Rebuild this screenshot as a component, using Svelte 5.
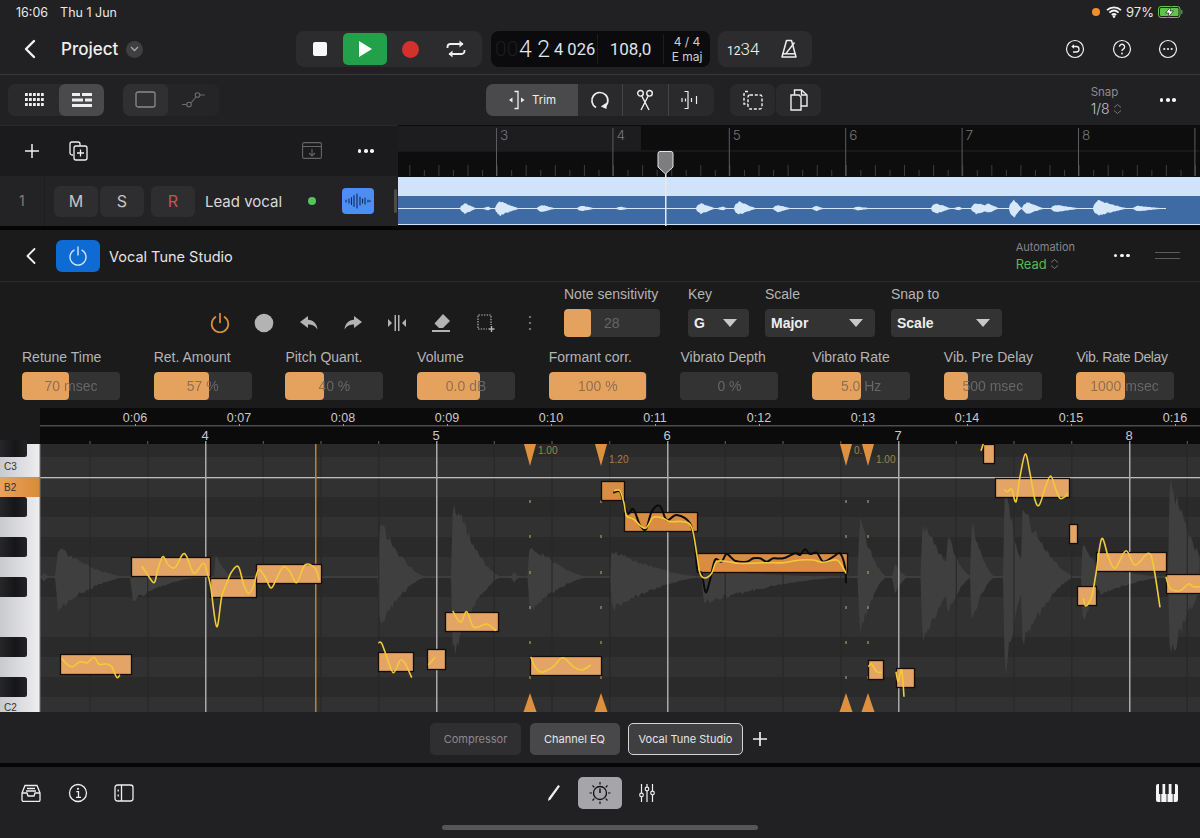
<script>
  function rng(seed) {
    let s = seed;
    return () => {
      s = (s * 16807) % 2147483647;
      return s / 2147483647;
    };
  }
  function wave(segs, x0, x1, cy, base, step, seed, p = 1.25, att = 3, jit = 0.15) {
    const r = rng(seed);
    const top = [];
    const bot = [];
    for (let x = x0; x <= x1; x += step) {
      let u = base;
      let d = base;
      for (const [o, len, a, b] of segs) {
        if (x < o - att || x > o + len) continue;
        const t = (x - o) / len;
        const e = t < 0 ? Math.sqrt((t * len + att) / att) : Math.pow(1 - t, p);
        u = Math.max(u, a * e);
        d = Math.max(d, b * e);
      }
      const j = 1 - jit + jit * r();
      top.push(`${x.toFixed(1)} ${(cy - u * j).toFixed(1)}`);
      bot.unshift(`${x.toFixed(1)} ${(cy + d * (1 - jit + jit * r())).toFixed(1)}`);
    }
    return 'M' + top.join('L') + 'L' + bot.join('L') + 'Z';
  }
  function curve(pts) {
    const p = pts.map(([x, y]) => [x / 3, 440 + y / 3]);
    let d = `M${p[0][0].toFixed(1)} ${p[0][1].toFixed(1)}`;
    for (let i = 0; i < p.length - 1; i++) {
      const a = p[Math.max(0, i - 1)];
      const b = p[i];
      const c = p[i + 1];
      const e = p[Math.min(p.length - 1, i + 2)];
      const c1 = [b[0] + (c[0] - a[0]) / 6, b[1] + (c[1] - a[1]) / 6];
      const c2 = [c[0] - (e[0] - b[0]) / 6, c[1] - (e[1] - b[1]) / 6];
      d += `C${c1[0].toFixed(1)} ${c1[1].toFixed(1)} ${c2[0].toFixed(1)} ${c2[1].toFixed(1)} ${c[0].toFixed(1)} ${c[1].toFixed(1)}`;
    }
    return d;
  }
  const off = (o, pts) => pts.map(([x, y]) => [x + o, y]);

  const edWave = wave(
    [[44, 6, 5, 5], [58, 72, 32, 36], [133, 70, 7, 26], [216, 18, 24, 29], [380, 48, 60, 55], [453, 50, 87, 86], [514, 6, 6, 6], [530, 62, 37, 38], [612, 95, 30, 36], [704, 150, 8, 29], [860, 28, 64, 63], [895, 14, 15, 18], [923, 42, 62, 75], [948, 25, 45, 40], [972, 24, 62, 48], [1005, 25, 104, 111], [1023, 55, 77, 73], [1083, 30, 37, 50], [1100, 70, 12, 20], [1170, 50, 107, 90]],
    40, 1200, 577, 1, 1.5, 91, 1.7, 2, 0.22
  );
  const regionWave = wave(
    [[465, 12, 6, 6], [488, 4, 2, 2], [500, 20, 8, 8], [542, 14, 4, 4], [582, 15, 3, 3], [621, 10, 2, 2], [701, 15, 6, 6], [723, 5, 2, 2], [739, 18, 8, 7], [778, 14, 4, 4], [817, 7, 3, 3], [858, 16, 2, 2], [936, 16, 6, 6], [959, 4, 2, 2], [976, 24, 6, 6], [988, 12, 6, 5], [1014, 8, 10, 10], [1027, 18, 7, 6], [1056, 26, 4, 4], [1098, 30, 9, 8], [1138, 28, 3, 3]],
    398, 1166, 208.5, 0.6, 1, 17, 1.1, 5, 0.25
  );

  const notes = [
    [60, 131, 654, 674], [131, 210, 557, 576], [210, 256, 578, 597], [256, 321, 564, 583],
    [378, 413, 652, 671], [427, 445, 649, 669], [445, 498, 612, 631], [530, 601, 656, 675],
    [601, 624, 481, 500, 1], [624, 697, 512, 531, 1], [697, 847, 553, 572, 1],
    [868, 883, 660, 679], [896, 914, 668, 687], [983, 994, 444, 463], [995, 1069, 478, 497],
    [1069, 1077, 524, 543], [1077, 1096, 586, 605], [1096, 1166, 552, 571], [1166, 1201, 574, 593]
  ];
  const yellow = [
    [[185, 655], [200, 672], [218, 680], [240, 665], [262, 668], [282, 652], [297, 673], [318, 672], [335, 680], [350, 712], [360, 705]],
    [[425, 378], [440, 400], [462, 428], [472, 395], [488, 350], [505, 375], [525, 383], [548, 343], [560, 350], [582, 400], [610, 370], [622, 400], [632, 440], [650, 560], [665, 470], [680, 430], [695, 395], [715, 380], [730, 430], [745, 460], [760, 440], [775, 390], [795, 410], [813, 444], [830, 415], [850, 380], [870, 395], [890, 428], [915, 375], [945, 385], [958, 420]],
    [[1135, 608], [1145, 610], [1160, 650], [1180, 698], [1200, 662], [1215, 670], [1235, 713]],
    off(1200, [[85, 675], [105, 652]]),
    off(1200, [[158, 513], [182, 547], [200, 515], [222, 562], [260, 552], [288, 572]]),
    off(1200, [[392, 650], [405, 680], [425, 697], [460, 680], [488, 653], [520, 680], [545, 690], [572, 675]]),
    off(1200, [[642, 152], [660, 152], [672, 190], [680, 228], [700, 237], [735, 265], [760, 232], [790, 235], [810, 245], [850, 245], [875, 262], [890, 340], [900, 400], [915, 414], [935, 400], [950, 365], [985, 365], [1020, 370], [1100, 368], [1150, 368], [1200, 360], [1240, 360], [1270, 367], [1310, 360], [1330, 385], [1338, 400]]),
    off(2400, [[205, 680], [215, 672], [230, 695], [245, 697]]),
    off(2400, [[288, 695], [295, 725], [305, 690], [312, 770]]),
    off(2400, [[543, 32], [550, 12]]),
    off(2400, [[612, 148], [622, 155], [635, 148], [648, 185], [660, 110], [676, 42], [690, 100], [705, 180], [718, 195], [735, 145], [752, 108], [768, 150], [780, 175], [795, 170], [803, 160]]),
    off(2400, [[850, 475], [857, 498], [875, 470], [888, 400], [905, 296], [925, 350], [945, 385], [978, 332], [1005, 375], [1045, 340], [1060, 375], [1080, 502]]),
    off(2400, [[1098, 410], [1110, 445], [1140, 452], [1165, 432], [1180, 440], [1200, 440]])
  ].map(curve);
  const black = curve(off(1200, [[640, 158], [660, 155], [672, 195], [685, 222], [700, 207], [720, 255], [738, 268], [755, 215], [780, 198], [800, 240], [830, 225], [870, 250], [885, 320], [892, 390], [905, 400], [917, 457], [930, 420], [945, 360], [965, 365], [980, 342], [1005, 362], [1040, 365], [1060, 355], [1080, 355], [1100, 365], [1120, 355], [1150, 355], [1185, 340], [1200, 345], [1215, 328], [1230, 342], [1250, 338], [1270, 365], [1300, 350], [1320, 340], [1335, 380], [1338, 430]]));

  const darkRows = [497, 537, 577, 637, 677];
  const minors = Array.from({ length: 20 }, (_, i) => 89.5 + i * 57.75);
  const bars = [[205, 4], [436, 5], [667, 6], [898, 7], [1129, 8]];
  const times = ['0:06', '0:07', '0:08', '0:09', '0:10', '0:11', '0:12', '0:13', '0:14', '0:15', '0:16'];
  const dashes = [500, 535, 571, 606, 641, 676];
  const marks = [530, 601, 846, 868];

  const arrBars = [[496, 3], [612.4, 4], [728.8, 5], [845.2, 6], [961.6, 7], [1078, 8], [1194.4, '']];
  const arrTicks = Array.from({ length: 56 }, (_, i) => 409.3 + i * 14.55);

  const sliders = [
    ['Retune Time', '70 msec', 46.5], ['Ret. Amount', '57 %', 55.5], ['Pitch Quant.', '40 %', 39],
    ['Volume', '0.0 dB', 63], ['Formant corr.', '100 %', 97], ['Vibrato Depth', '0 %', 0],
    ['Vibrato Rate', '5.0 Hz', 48.5], ['Vib. Pre Delay', '500 msec', 24], ['Vib. Rate Delay', '1000 msec', 49]
  ];
  const selects = [['Key', 'G', 'w-key'], ['Scale', 'Major', 'w-scale'], ['Snap to', 'Scale', 'w-snap']];
</script>

<div class="app">
  <div class="status">
    <span class="time">16:06</span><span class="date">Thu 1 Jun</span>
    <span class="grow"></span>
    <i class="odot"></i>
    <svg width="16" height="12" viewBox="0 0 16 12" class="wifi"><path d="M1 4.200C5 .5 11 .5 15 4.200M3.400 6.600c2.800-2.500 6.400-2.500 9.200 0M5.800 9c1.400-1.200 3-1.200 4.400 0" fill="none" stroke="#f2f2f2" stroke-width="1.800"/><circle cx="8" cy="10.600" r="1.300" fill="#f2f2f2"/></svg>
    <span class="pct">97%</span>
    <svg width="25" height="12" viewBox="0 0 25 12"><rect x=".5" y=".5" width="21.500" height="11" rx="2.500" fill="none" stroke="#6cc04a"/><rect x="2" y="2" width="18.500" height="8" rx="1.200" fill="#5fc44c"/><rect x="23" y="4" width="1.500" height="4" rx=".7" fill="#777"/><path d="M13 .5 7.500 7H11l-1 4.500L15.500 5H12z" fill="#fff" stroke="#222" stroke-width=".7"/></svg>
  </div>

  <div class="topbar">
    <div class="t-left">
      <svg width="14" height="20" viewBox="0 0 14 20" class="back"><path d="M11 2 3 10l8 8" fill="none" stroke="#f2f2f2" stroke-width="2.400" stroke-linecap="round" stroke-linejoin="round"/></svg>
      <span class="project">Project</span>
      <span class="chev"><svg width="9" height="6" viewBox="0 0 9 6"><path d="m1 1 3.500 3.500L8 1" fill="none" stroke="#a8a8aa" stroke-width="1.300"/></svg></span>
    </div>
    <div class="transport">
      <span class="tbtn"><i class="stop"></i></span>
      <span class="tbtn play"><svg width="14" height="16" viewBox="0 0 14 16"><path d="M1 0v16l13-8z" fill="#fff"/></svg></span>
      <span class="tbtn"><i class="rec"></i></span>
      <span class="tbtn"><svg width="20" height="18" viewBox="0 0 20 18"><path d="M1.500 8V7a3 3 0 0 1 3-3H17M18.500 10v1a3 3 0 0 1-3 3H3" fill="none" stroke="#f0f0f0" stroke-width="1.800"/><path d="M13.500 0.500 17.500 4l-4 3.500zM6.500 10.500 2.500 14l4 3.500z" fill="#f0f0f0"/></svg></span>
    </div>
    <div class="lcd">
      <span class="ghost">00</span><span class="big">4 2</span><span class="mid">4 026</span>
      <span class="tempo">108,0</span>
      <span class="sig"><span>4 / 4</span><span>E maj</span></span>
    </div>
    <div class="count">
      <span class="cnt"><small>12</small>34</span>
      <svg width="20" height="20" viewBox="0 0 20 20"><path d="M7.500 1.500h5l4.500 16.500h-14z" fill="none" stroke="#eee" stroke-width="1.500" stroke-linejoin="round"/><path d="M3.500 14.800h13" stroke="#eee" stroke-width="1.500"/><path d="M7 14.500 15.500 3.500" stroke="#eee" stroke-width="1.400"/></svg>
    </div>
    <span class="grow"></span>
    <div class="t-right">
      <svg width="20" height="20" viewBox="0 0 20 20"><circle cx="10" cy="10" r="8.500" fill="none" stroke="#f0f0f0" stroke-width="1.200"/><path d="M7.500 7.500h3.800a2.700 2.700 0 0 1 0 5.500H8" fill="none" stroke="#f0f0f0" stroke-width="1.300"/><path d="M9 5.300 6.300 7.500 9 9.700z" fill="#f0f0f0"/></svg>
      <svg width="20" height="20" viewBox="0 0 20 20"><circle cx="10" cy="10" r="8.500" fill="none" stroke="#f0f0f0" stroke-width="1.200"/><path d="M7.400 7.800a2.600 2.600 0 1 1 3.900 2.300c-.9.500-1.300 1-1.300 2" fill="none" stroke="#f0f0f0" stroke-width="1.400"/><circle cx="10" cy="14.500" r=".9" fill="#f0f0f0"/></svg>
      <svg width="20" height="20" viewBox="0 0 20 20"><circle cx="10" cy="10" r="8.500" fill="none" stroke="#f0f0f0" stroke-width="1.200"/><circle cx="6.300" cy="10" r="1.100" fill="#f0f0f0"/><circle cx="10" cy="10" r="1.100" fill="#f0f0f0"/><circle cx="13.700" cy="10" r="1.100" fill="#f0f0f0"/></svg>
    </div>
  </div>

  <div class="toolbar">
    <div class="seg s1">
      <span class="tile">
        <svg width="20" height="16" viewBox="0 0 20 16" fill="#eee">
          {#each [1, 6, 11] as y}{#each [1, 5, 9, 13, 17] as x}<rect {x} {y} width="2.800" height="3" rx=".5"/>{/each}{/each}
        </svg>
      </span>
      <span class="tile on">
        <svg width="20" height="16" viewBox="0 0 20 16" fill="#eee"><rect y="1" width="8" height="3"/><rect x="10" y="1" width="10" height="3"/><rect y="6.500" width="11" height="3"/><rect x="13" y="6.500" width="7" height="3"/><rect y="12" width="20" height="3"/></svg>
      </span>
    </div>
    <div class="seg s2">
      <span class="tile lite"><svg width="21" height="18" viewBox="0 0 21 18"><rect x="1" y="1" width="19" height="15" rx="2" fill="none" stroke="#8a8a8c" stroke-width="1.300"/></svg></span>
      <span class="tile"><svg width="24" height="18" viewBox="0 0 24 18" fill="none" stroke="#6c6c6e" stroke-width="1.100"><circle cx="7" cy="13.500" r="2.300"/><circle cx="15.500" cy="4" r="2.300"/><path d="M0 13.500h4.700M9 12 14 6M17.800 4h5"/></svg></span>
    </div>
    <div class="seg s3">
      <span class="tile on trim">
        <svg width="18" height="20" viewBox="0 0 18 20" fill="#eee"><path d="M6.500 1.500h3.500v17H6.500" fill="none" stroke="#eee" stroke-width="1.300"/><path d="M4.500 7.500 1 10l3.500 2.500zM13 7.500 16.500 10 13 12.500z"/></svg>
        <span>Trim</span>
      </span>
      <span class="cell"><svg width="20" height="22" viewBox="0 0 20 22"><path d="M6 18.500A8 8 0 1 1 14.500 18" fill="none" stroke="#eee" stroke-width="1.700"/><path d="m16.800 13.600-.3 6.400-5.700-2.500z" fill="#eee"/></svg></span>
      <span class="cell"><svg width="18" height="22" viewBox="0 0 18 22" fill="none" stroke="#eee" stroke-width="1.400"><circle cx="4.500" cy="4.300" r="2.800"/><circle cx="13.500" cy="4.300" r="2.800"/><path d="M5.800 7 13 21M12.200 7 5 21"/></svg></span>
      <span class="cell"><svg width="20" height="20" viewBox="0 0 20 20" fill="none" stroke="#eee" stroke-width="1.200"><path d="M3.500 1.500h3.500v17H3.500M1 8v4M4.500 8.500v3M10.500 8v4M15.500 6v8"/></svg></span>
    </div>
    <div class="pair">
      <span class="tile w45"><svg width="20" height="20" viewBox="0 0 20 20" fill="none" stroke="#eee" stroke-width="1.400" stroke-dasharray="3 1.800"><path d="M5 1.500H2a1 1 0 0 0-1 1V14h4"/><rect x="5" y="5" width="14" height="14" rx="2"/></svg></span>
      <span class="tile w45"><svg width="20" height="24" viewBox="0 0 20 24" fill="none" stroke="#eee" stroke-width="1.400"><path d="M2 7h8l2 2v13H2zM5.500 7V2h7l5.500 5v11h-6"/><path d="M12.500 2v5h5"/></svg></span>
    </div>
    <span class="grow"></span>
    <div class="snap">
      <span class="snap-l">Snap</span>
      <span class="snap-v">1/8 <svg width="9" height="12" viewBox="0 0 9 12"><path d="m1 4.500 3.500-3L8 4.500M1 7.500l3.500 3 3.500-3" fill="none" stroke="#777" stroke-width="1"/></svg></span>
    </div>
    <span class="dots d-tb"><i></i><i></i><i></i></span>
  </div>

  <div class="arrange">
    <div class="tracks">
      <div class="trow-h">
        <svg width="16" height="16" viewBox="0 0 16 16" class="plus"><path d="M8 1v14M1 8h14" stroke="#f0f0f0" stroke-width="1.500"/></svg>
        <svg width="19" height="20" viewBox="0 0 19 20" class="dup" fill="none" stroke="#f0f0f0" stroke-width="1.300"><path d="M4 14H3a2 2 0 0 1-2-2V3a2 2 0 0 1 2-2h6a2 2 0 0 1 2 2v2"/><rect x="5" y="5" width="13" height="14" rx="2"/><path d="M11.500 8.500v7M8 12h7"/></svg>
        <span class="grow"></span>
        <svg width="20" height="18" viewBox="0 0 20 18" fill="none" stroke="#656567" stroke-width="1.100"><rect x=".6" y=".6" width="18.800" height="15.800" rx="1.500"/><path d="M.6 4.500h18.800M10 7v6.500M7 11l3 3 3-3"/></svg>
        <span class="dots d-tr"><i></i><i></i><i></i></span>
      </div>
      <div class="trow">
        <span class="tnum">1</span>
        <span class="tb m">M</span><span class="tb s">S</span><span class="tb r">R</span>
        <span class="tname">Lead vocal</span>
        <i class="gdot"></i>
        <span class="wbtn"><svg width="26" height="16" viewBox="0 0 26 16" stroke="#0f2a55" stroke-width="1.100" stroke-linecap="round"><path d="M1 7v2M4 6v4M6.500 4.500v7M9 2.500v11M12 1v14M15 4v8M17.500 6v4M20 5v6M23 7v2M25 7.500v1"/></svg></span>
        <i class="scroller"></i>
      </div>
    </div>
    <svg class="arr-svg" width="802" height="101" viewBox="398 125 802 101">
      <rect x="398" y="125" width="802" height="101" fill="#0d0d0e"/>
      <rect x="398" y="126" width="243" height="24.500" fill="#1d1d1f"/>
      <rect x="398" y="150.500" width="802" height="1" fill="#252527"/>
      {#each arrTicks as x, i}
        <rect {x} y={i % 2 ? 170 : 165} width="1" height={i % 2 ? 6 : 11} fill="#3d3d3f"/>
      {/each}
      {#each arrBars as [x, n]}
        <rect {x} y="128" width="1" height="48" fill="#5c5c5e"/>
        <text x={x + 4} y="140" class="arr-n">{n}</text>
      {/each}
      <rect x="398" y="177" width="802" height="19" fill="#cfe4fb"/>
      <rect x="398" y="196" width="802" height="28" fill="#3f6ba5"/>
      <rect x="398" y="224" width="802" height="1" fill="#cfe4fb"/>
      <path d={regionWave} fill="#d7e8fb"/>
      <rect x="665" y="170" width="1.500" height="56" fill="#e8e8e8"/>
      <path d="M660 151.500h11a2 2 0 0 1 2 2V167l-7.500 7-7.500-7v-13.500a2 2 0 0 1 2-2z" fill="#7d7d7f" stroke="#e6e6e6" stroke-width="1"/>
    </svg>
  </div>
  <div class="band"></div>

  <div class="plughead">
    <svg width="12" height="18" viewBox="0 0 12 18" class="pback"><path d="M9.500 2 2.500 9l7 7" fill="none" stroke="#f0f0f0" stroke-width="1.800" stroke-linecap="round" stroke-linejoin="round"/></svg>
    <span class="power"><svg width="18" height="20" viewBox="0 0 18 20" fill="none" stroke="#cfe4fb" stroke-width="1.400"><path d="M9 1v8M5 4.200a8 8 0 1 0 8 0" stroke-linecap="round"/></svg></span>
    <span class="pname">Vocal Tune Studio</span>
    <span class="grow"></span>
    <div class="auto">
      <span class="auto-l">Automation</span>
      <span class="auto-v">Read <svg width="9" height="12" viewBox="0 0 9 12"><path d="m1 4.500 3.500-3L8 4.500M1 7.500l3.500 3 3.500-3" fill="none" stroke="#777" stroke-width="1"/></svg></span>
    </div>
    <span class="dots d-ph"><i></i><i></i><i></i></span>
    <span class="grip"></span>
  </div>

  <div class="controls">
    <div class="row1">
      <div class="tools">
        <span class="tool"><svg width="20" height="22" viewBox="0 0 20 22" fill="none" stroke="#d9903c" stroke-width="1.700"><path d="M10 1.500v9M5.500 5a8.300 8.300 0 1 0 9 0" stroke-linecap="round"/></svg></span>
        <span class="tool"><svg width="20" height="20" viewBox="0 0 20 20"><circle cx="10" cy="10" r="9.300" fill="#b3b3b3"/></svg></span>
        <span class="tool"><svg width="20" height="16" viewBox="0 0 20 16"><path d="M9 1 1 7l8 6V9.500c4 0 7 1 9.500 5C18 8.500 14 5 9 4.800z" fill="#b3b3b3"/></svg></span>
        <span class="tool"><svg width="20" height="16" viewBox="0 0 20 16"><path d="m11 1 8 6-8 6V9.500c-4 0-7 1-9.500 5C2 8.500 6 5 11 4.800z" fill="#b3b3b3"/></svg></span>
        <span class="tool"><svg width="20" height="18" viewBox="0 0 20 18" fill="#b3b3b3"><path d="M1 5v8l4-4zM19 5v8l-4-4z"/><rect x="7.500" y="1" width="1.500" height="16"/><rect x="11" y="1" width="1.500" height="16"/></svg></span>
        <span class="tool"><svg width="20" height="20" viewBox="0 0 20 20" fill="#b3b3b3"><path d="m12 1 7 7-7 7H8L3.500 10.500z"/><rect x="1" y="17" width="18" height="2"/></svg></span>
        <span class="tool"><svg width="20" height="20" viewBox="0 0 20 20" fill="none" stroke="#b3b3b3" stroke-width="1.200"><path d="M2 15V2h13v10" stroke-dasharray="1.500 1.200"/><path d="M2 16h9" stroke-dasharray="1.500 1.200"/><path d="M15.500 13v6M12.500 16h6" stroke-width="1.400"/></svg></span>
        <span class="tool"><svg width="4" height="16" viewBox="0 0 4 16" fill="#8c8c8c"><circle cx="2" cy="2" r="1.100"/><circle cx="2" cy="8" r="1.100"/><circle cx="2" cy="14" r="1.100"/></svg></span>
      </div>
      <div class="field w-note">
        <span class="lbl">Note sensitivity</span>
        <div class="box"><i class="nfill"></i><span class="n28">28</span></div>
      </div>
      {#each selects as [l, v, w]}
        <div class="field {w}">
          <span class="lbl">{l}</span>
          <div class="box sel"><span>{v}</span><svg width="14" height="8" viewBox="0 0 14 8"><path d="M0 0h14L7 8z" fill="#c8c8c8"/></svg></div>
        </div>
      {/each}
    </div>
    <div class="row2">
      {#each sliders as [l, v, f]}
        <div class="field">
          <span class="lbl">{l}</span>
          <div class="box slider">
            <div class="fill" style="width:{f}px"></div>
            <span class="val" style="--f:{f}px">{v}</span>
          </div>
        </div>
      {/each}
    </div>
  </div>

  <svg class="editor" width="1200" height="304" viewBox="0 408 1200 304">
    <defs>
      <linearGradient id="wk" x1="0" x2="1" y1="0" y2="0"><stop offset="0" stop-color="#c9cace"/><stop offset="1" stop-color="#eeeef1"/></linearGradient>
      <linearGradient id="ok" x1="0" x2="1" y1="0" y2="0"><stop offset="0" stop-color="#e9a25a"/><stop offset="1" stop-color="#d98a38"/></linearGradient>
      <linearGradient id="bk" x1="0" x2="1" y1="0" y2="0"><stop offset="0" stop-color="#2c2c2e"/><stop offset=".6" stop-color="#161618"/><stop offset="1" stop-color="#232325"/></linearGradient>
    </defs>
    <rect x="0" y="408" width="1200" height="304" fill="#1b1b1b"/>
    <rect x="40" y="408" width="1160" height="36" fill="#0b0b0b"/>
    <rect x="40" y="425" width="1160" height="1.500" fill="#4c4c4c"/>
    {#each times as t, i}
      <text x={135 + i * 104} y="422" class="t-time">{t}</text>
      <rect x={135 + i * 104} y="424" width="1" height="2" fill="#999"/>
    {/each}
    {#each minors as x}
      <rect {x} y="441" width="1" height="3" fill="#666"/>
    {/each}
    {#each bars as [x, n]}
      <rect {x} y="441" width="1.500" height="3" fill="#999"/>
      <text {x} y="440" class="t-bar">{n}</text>
    {/each}

    <rect x="40" y="444" width="1160" height="268" fill="#313131"/>
    <rect x="40" y="444" width="1160" height="13" fill="#2a2a2a"/>
    {#each darkRows as y}
      <rect x="40" {y} width="1160" height="20" fill="#2a2a2a"/>
    {/each}
    <path d={edWave} fill="#3f3f3f"/>
    {#each minors as x}
      <rect {x} y="444" width="1" height="268" fill="#272727"/>
    {/each}
    <rect x="40" y="477" width="1160" height="1.300" fill="#bdbdbd"/>
    {#each bars as [x]}
      <rect {x} y="444" width="1.500" height="268" fill="#a9a9a9"/>
    {/each}
    <rect x="315" y="444" width="1.500" height="268" fill="#c67f2c"/>

    {#each marks as x}
      <path d="M{x - 6} 444h12l-6 22z" fill="#dd9140"/>
      <path d="M{x} 693l6.500 19h-13z" fill="#dd9140"/>
      {#each dashes as y}
        <rect x={x - 0.5} {y} width="1" height="3" fill="#c9a878"/>
      {/each}
    {/each}
    <text x="538" y="454" class="t-mk">1.00</text>
    <text x="609" y="463" class="t-mk">1.20</text>
    <text x="854" y="454" class="t-mk">0.</text>
    <text x="876" y="463" class="t-mk">1.00</text>

    {#each notes as [a, b, t, u, dk]}
      <rect x={a + 0.5} y={t + 0.5} width={b - a} height={u - t} fill={dk ? '#d98c42' : '#e4a466'} stroke="#140d06" stroke-width="1.300"/>
    {/each}
    <path d={black} fill="none" stroke="#0b0b0b" stroke-width="2"/>
    {#each yellow as d}
      <path {d} fill="none" stroke="#f1ca3a" stroke-width="1.600" stroke-linejoin="round"/>
    {/each}

    <rect x="0" y="444" width="40" height="268" fill="url(#wk)"/>
    <rect x="0" y="477" width="40" height="20" fill="url(#ok)"/>
    {#each darkRows as y}
      <rect x="-4" {y} width="31" height="20" rx="2.500" fill="url(#bk)"/>
    {/each}
    <rect x="39.500" y="444" width="1" height="268" fill="#777"/>
    <rect x="-4" y="440" width="31" height="17" rx="2.500" fill="url(#bk)"/>
    <text x="4" y="470" class="t-key">C3</text>
    <text x="4" y="491" class="t-key">B2</text>
    <text x="4" y="711" class="t-key">C2</text>
  </svg>

  <div class="tabs">
    <span class="tab off">Compressor</span>
    <span class="tab">Channel EQ</span>
    <span class="tab cur">Vocal Tune Studio</span>
    <svg width="16" height="16" viewBox="0 0 16 16"><path d="M8 1v14M1 8h14" stroke="#f0f0f0" stroke-width="1.700"/></svg>
  </div>
  <div class="band b2"></div>

  <div class="bottom">
    <div class="bside">
      <svg width="20" height="18" viewBox="0 0 20 18" class="b1" fill="none" stroke="#eee" stroke-width="1.300"><path d="M1 9 4 1.500h12L19 9v7a1.500 1.500 0 0 1-1.500 1.500h-15A1.500 1.500 0 0 1 1 16z"/><path d="M1 9h5l1 3h6l1-3h5M6 4.500h8M5 7h10"/></svg>
      <svg width="20" height="20" viewBox="0 0 20 20" class="b2i"><circle cx="10" cy="10" r="8.500" fill="none" stroke="#eee" stroke-width="1.300"/><circle cx="10" cy="5.800" r="1.100" fill="#eee"/><path d="M8.300 8.600H10.500v5.500M8 14.300h5" fill="none" stroke="#eee" stroke-width="1.300"/></svg>
      <svg width="20" height="18" viewBox="0 0 20 18" class="b3" fill="none" stroke="#eee" stroke-width="1.300"><rect x="1" y="1" width="18" height="16" rx="2.500"/><path d="M7.500 1v16M4.200 5.500v2M4.200 10.500v2"/></svg>
    </div>
    <div class="bmid">
      <svg width="14" height="18" viewBox="0 0 14 18" class="bp"><path d="M1 17 1.600 14 11.200 1l1.800 1.200L3.500 15.400z" fill="#eee"/></svg>
      <span class="knob">
        <svg width="24" height="24" viewBox="0 0 24 24" fill="none" stroke="#111" stroke-width="1.300"><circle cx="12" cy="12" r="6.500"/><path d="M12 7.500V12" stroke-width="1.500"/><path d="M12 1v2.500M12 20.500V23M1.500 12H4M20 12h2.500M4.500 4.500l1.800 1.800M17.700 6.300l1.800-1.800M4.500 19.500l1.800-1.800M17.700 17.700l1.800 1.800" stroke-width="1.200"/></svg>
      </span>
      <svg width="16" height="20" viewBox="0 0 16 20" class="bm" fill="none" stroke="#eee" stroke-width="1.200"><path d="M2.500 1v18M8 1v18M13.500 1v18"/><circle cx="2.500" cy="12" r="1.800" fill="#212123"/><circle cx="8" cy="6" r="1.800" fill="#212123"/><circle cx="13.500" cy="10" r="1.800" fill="#212123"/></svg>
    </div>
    <div class="bside right">
      <svg width="22" height="18" viewBox="0 0 22 18" class="bk"><rect width="22" height="18" rx="2" fill="#f4f4f4"/><path d="M3 0h3.500v10H3zM9.200 0h3.500v10H9.200zM15.500 0H19v10h-3.500z" fill="#222"/><path d="M4.800 10v8M11 10v8M17.200 10v8" stroke="#222" stroke-width=".9"/></svg>
    </div>
    <i class="home"></i>
  </div>
</div>

<style>
  :global(body) { margin: 0; background: #212123; }
  .app {
    width: 1200px; height: 838px; overflow: hidden; background: #212123; color: #eee;
    font-family: Inter, "Liberation Sans", sans-serif; position: relative;
  }
  .grow { flex: 1; }
  svg { display: block; flex: none; }
  i { display: block; flex: none; }

  .status { height: 30px; display: flex; align-items: center; padding: 0 17px 6px 16px; box-sizing: border-box; font-size: 12.500px; color: #e8e8e8; }
  .date { margin-left: 12px; }
  .odot { width: 8px; height: 8px; border-radius: 50%; background: #f0902c; margin-right: 6px; }
  .pct { margin: 0 4px 0 4px; font-size: 13px; }

  .topbar { height: 44px; border-bottom: 1px solid #38383a; display: flex; align-items: flex-start; box-sizing: content-box; }
  .t-left { width: 296px; height: 38px; display: flex; align-items: center; }
  .back { margin-left: 23px; }
  .project { margin-left: 24px; font-size: 17px; font-weight: 500; }
  .chev { width: 17px; height: 17px; border-radius: 50%; background: #3f3f42; margin-left: 8px; display: flex; align-items: center; justify-content: center; }
  .transport { width: 186px; height: 36px; margin-top: 1px; background: #2c2c2e; border-radius: 8px; display: flex; align-items: center; padding-left: 1px; box-sizing: border-box; }
  .tbtn { width: 46px; display: flex; align-items: center; justify-content: center; height: 32px; }
  .tbtn.play { background: #22a14a; border-radius: 5px; width: 44px; }
  .stop { width: 14px; height: 14px; background: #f8f8f8; border-radius: 2px; }
  .rec { width: 17px; height: 17px; background: #d2312c; border-radius: 50%; }
  .lcd { width: 219px; height: 36px; margin: 1px 0 0 9px; background: #0b0b0d; border-radius: 8px; display: flex; align-items: center; font-weight: 300; box-sizing: border-box; padding-left: 4px; overflow: hidden; }
  .ghost { font-size: 21px; color: #1d1d22; width: 24px; font-family: Roboto, sans-serif; }
  .big { font-size: 23px; color: #e0e8f0; width: 35px; font-family: Roboto, sans-serif; font-weight: 300; }
  .mid { font-size: 16.500px; color: #dfe5ea; width: 43px; font-weight: 400; font-family: Roboto, sans-serif; }
  .tempo { font-size: 17px; color: #e2e2e4; width: 65px; text-align: center; border-left: 1px solid #1c1c1e; border-right: 1px solid #1c1c1e; line-height: 30px; font-weight: 400; font-family: Roboto, sans-serif; }
  .sig { flex: 1; display: flex; flex-direction: column; align-items: center; font-size: 12px; line-height: 15px; color: #cfcfcf; font-weight: 400; }
  .count { width: 94px; height: 36px; margin: 1px 0 0 8px; background: #2c2c2e; border-radius: 8px; display: flex; align-items: center; box-sizing: border-box; padding-left: 9px; }
  .cnt { font-size: 17px; font-weight: 300; width: 52px; font-family: Roboto, sans-serif; }
  .cnt small { font-size: 12px; font-weight: 400; }
  .t-right { display: flex; gap: 26.500px; margin: 9px 22px 0 0; }

  .toolbar { height: 50px; display: flex; align-items: center; }
  .seg { height: 32px; display: flex; border-radius: 7px; background: #2a2a2c; overflow: hidden; box-sizing: border-box; }
  .tile { display: flex; align-items: center; justify-content: center; height: 32px; width: 48px; border-radius: 6px; }
  .tile.on { background: #4a4a4d; }
  .s1 { margin-left: 8px; width: 96px; }
  .s1 .tile { width: 51px; }
  .s1 .tile.on { width: 45px; }
  .s2 { margin-left: 19px; width: 96px; background: #252527; }
  .s2 .lite { background: #303032; width: 45px; border-radius: 6px; }
  .s2 .tile:last-child { width: 51px; }
  .s3 { margin-left: 267px; width: 228px; }
  .trim { width: 92px; gap: 6px; font-size: 11.500px; border-radius: 6px 0 0 6px; }
  .cell { width: 45.300px; height: 32px; display: flex; align-items: center; justify-content: center; border-right: 1px solid #444446; box-sizing: border-box; }
  .cell:last-child { border: 0; }
  .pair { display: flex; gap: 1px; margin-left: 16px; }
  .w45 { width: 45px; background: #2a2a2c; border-radius: 7px; }
  .snap { display: flex; flex-direction: column; width: 69px; margin-top: 2px; }
  .snap-l { font-size: 11.500px; color: #8c8c8e; line-height: 14px; }
  .snap-v { font-size: 14px; color: #c4c4c6; font-weight: 300; display: flex; align-items: center; gap: 3px; margin-top: 1px; line-height: 18px; }
  .dots { display: flex; gap: 2.800px; flex: none; align-items: center; }
  .dots i { width: 3.600px; height: 3.600px; background: #f4f4f4; border-radius: 50%; }
  .d-tb { margin-right: 24px; }

  .arrange { height: 101px; display: flex; }
  .tracks { width: 398px; display: flex; flex-direction: column; }
  .trow-h { height: 51px; background: #1b1b1d; border-top: 1px solid #2a2a2c; box-sizing: border-box; display: flex; align-items: center; }
  .plus { margin-left: 24px; }
  .dup { margin-left: 29px; }
  .d-tr { margin: 0 24px 0 36px; }
  .trow { height: 50px; background: #232325; display: flex; align-items: center; position: relative; }
  .tnum { width: 45px; box-sizing: border-box; padding-left: 19px; font-size: 14px; color: #7c7c7e; line-height: 50px; border-right: 1px solid #1d1d1f; }
  .tb { width: 44px; height: 31px; background: #2e2e30; border-radius: 6px; display: flex; align-items: center; justify-content: center; font-size: 16px; color: #c4c4c6; font-weight: 400; }
  .tb.m { margin-left: 9px; }
  .tb.s { margin-left: 2px; }
  .tb.r { margin-left: 7px; color: #c25550; }
  .tname { margin-left: 10px; font-size: 15px; color: #d8d8da; width: 103px; white-space: nowrap; }
  .gdot { width: 8px; height: 8px; border-radius: 50%; background: #52c45c; }
  .wbtn { margin-left: 26px; width: 32px; height: 26px; background: #4d8df5; border-radius: 4px; display: flex; align-items: center; justify-content: center; }
  .scroller { margin-left: 20px; width: 3px; height: 24px; background: #4c4c4e; border-radius: 2px; }
  .arr-n { font: 300 13.500px Inter, sans-serif; fill: #77777a; }
  .band { height: 4px; background: #050505; }
  .band.b2 { background: #060606; }

  .plughead { height: 52px; background: #1b1b1b; border-bottom: 1px solid #2b2b2b; box-sizing: border-box; display: flex; align-items: center; }
  .pback { margin-left: 25px; }
  .power { margin-left: 19px; width: 44px; height: 32px; background: #0e6bd3; border-radius: 6px; display: flex; align-items: center; justify-content: center; }
  .pname { margin: 1px 0 0 9px; font-size: 14.500px; color: #e4e4e4; }
  .auto { display: flex; flex-direction: column; width: 98px; }
  .auto-l { font-size: 11px; color: #86868a; line-height: 14px; }
  .auto-v { font-size: 13px; color: #56b85a; display: flex; align-items: center; gap: 3px; line-height: 16px; margin-top: 2px; }
  .d-ph { margin-right: 25px; }
  .grip { width: 25px; height: 5px; border-top: 1px solid #5c5c5c; border-bottom: 1px solid #5c5c5c; margin-right: 20px; }

  .controls { height: 126px; background: #1b1b1b; font-family: "Liberation Sans", Arial, sans-serif; box-sizing: border-box; padding-top: 3px; }
  .row1 { display: flex; align-items: flex-end; padding-left: 198px; gap: 16px; }
  .tools { display: flex; width: 354px; height: 28px; margin-right: -4px; }
  .tool { width: 44.300px; display: flex; align-items: center; justify-content: center; }
  .field { display: flex; flex-direction: column; gap: 6px; width: 98px; }
  .lbl { font-size: 14px; line-height: 18px; color: #b4b4b4; white-space: nowrap; }
  .row2 .field:last-child .lbl { letter-spacing: -0.4px; margin-left: 1px; }
  .box { height: 28px; background: #333; border-radius: 4px; position: relative; overflow: hidden; }
  .w-note { width: 96px; margin-right: 12px; }
  .nfill { position: absolute; left: 0; top: 0; bottom: 0; width: 27px; background: #e4a25e; border-radius: 4px; }
  .n28 { position: absolute; left: 40px; top: 0; line-height: 28px; font-size: 14px; color: #666; }
  .w-key { width: 61px; }
  .w-scale { width: 110px; }
  .w-snap { width: 111px; }
  .sel { display: flex; align-items: center; justify-content: space-between; padding: 0 12px 0 6px; font-size: 14px; font-weight: 700; color: #eee; }
  .row2 { display: grid; grid-template-columns: repeat(9, 98px); column-gap: 33.700px; padding-left: 22px; margin-top: 11px; }
  .val {
    position: absolute; left: 0; top: 0; width: 98px; text-align: center; line-height: 28px; font-size: 14px; white-space: nowrap;
    background: linear-gradient(to right, #8b6f50 var(--f), #686868 var(--f));
    -webkit-background-clip: text; background-clip: text; color: transparent;
  }
  .fill { position: absolute; left: 0; top: 0; bottom: 0; background: #e4a25e; border-radius: 4px; }

  .editor { display: block; }
  .t-time { font: 400 12.500px "Liberation Sans", sans-serif; fill: #c8c8c8; text-anchor: middle; }
  .t-bar { font: 400 13px "Liberation Sans", sans-serif; fill: #c8c8c8; text-anchor: middle; }
  .t-mk { font: 400 10px "Liberation Sans", sans-serif; fill: #a77d48; }
  .t-key { font: 400 10px "Liberation Sans", sans-serif; fill: #333; }

  .tabs { height: 51px; display: flex; align-items: flex-start; justify-content: center; padding: 11px 2.500px 0 0; box-sizing: border-box; gap: 8.500px; }
  .tabs svg { margin: 8px 0 0 0; }
  .tab { height: 32px; border-radius: 5px; background: #48484b; display: flex; align-items: center; justify-content: center; width: 90px; font-size: 11px; color: #e6e6e6; box-sizing: border-box; }
  .tab.off { background: #2f2f31; color: #8a8a8c; width: 91px; }
  .tab.cur { width: 115px; border: 1px solid #d4d4d6; background: #3f3f42; }

  .bottom { height: 71px; display: grid; grid-template-columns: 1fr auto 1fr; align-items: start; position: relative; }
  .bside { display: flex; align-items: center; height: 32px; margin-top: 10px; }
  .bside.right { justify-content: flex-end; }
  .b1 { margin-left: 21px; }
  .b2i { margin-left: 27px; }
  .b3 { margin-left: 26px; }
  .bmid { display: flex; align-items: center; gap: 17px; margin: 10px 0 0 2px; }
  .knob { width: 44px; height: 32px; background: #a5a5aa; border-radius: 5px; display: flex; align-items: center; justify-content: center; }
  .bk { margin-right: 22px; }
  .home { position: absolute; left: 442px; top: 58px; width: 316px; height: 5px; border-radius: 3px; background: #565658; }
</style>
